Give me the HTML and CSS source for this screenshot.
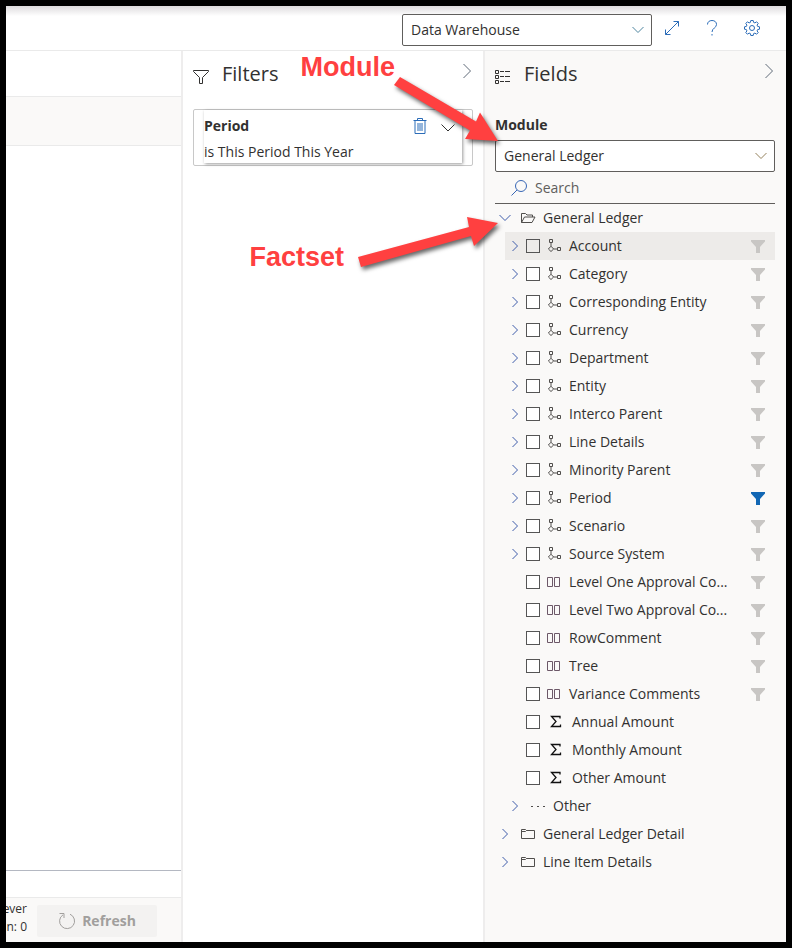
FILE: index.html
```html
<!DOCTYPE html>
<html lang="en">
<head>
<meta charset="utf-8">
<title>Data Warehouse</title>
<link rel="stylesheet" href="styles.css">
</head>
<body>
<svg class="sprite" aria-hidden="true">
  <symbol id="right" viewBox="0 0 16 16"><path d="M5.500 3 10.500 8 5.500 13"/></symbol>
  <symbol id="down" viewBox="0 0 16 16"><path d="M2.500 5 8 10.500 13.500 5"/></symbol>
  <symbol id="hier" viewBox="0 0 16 16"><path d="M3.500 1.500h3v3h-3zM11.500 9.500h3v3h-3zM5 4.500v3.500M7.500 11h4"/><path d="M5 8.200 7.600 11 5 13.500 2.400 11z"/></symbol>
  <symbol id="cols" viewBox="0 0 16 16"><path d="M1.500 3.500h5v9h-5zM8.500 3.500h5v9h-5z"/></symbol>
  <symbol id="sigma" viewBox="0 0 19 16"><path d="M14 4.500V2.500H5.500L10 7.500 5.500 12.500H14.500V10.500"/></symbol>
  <symbol id="dots" viewBox="0 0 16 16"><path d="M1 8.500h2M7 8.500h2M13 8.500h2"/></symbol>
  <symbol id="folder" viewBox="0 0 16 16"><path d="M1.500 12.500v-9h4l1 1h8v8zM1.500 5.500h4l1-1"/></symbol>
  <symbol id="open" viewBox="0 0 16 16"><path d="M1.500 12.500v-9h4l1.500 1.500h5.500v2M1.500 12.500 4.500 7h10.500l-3 5.500z"/></symbol>
  <symbol id="funnel" viewBox="0 0 16 16"><path d="M1 2h14v1.500L10 9v6H6V9L1 3.500z"/></symbol>
</svg>
<div class="app">
  <header class="topbar">
    <div class="select-box top-select">
      <select aria-label="Data source"><option>Data Warehouse</option></select>
      <svg class="down teal"><use href="#down"/></svg>
    </div>
    <button class="tool" aria-label="Expand"><svg viewBox="0 0 16 16"><path d="M1.500 14.500 14.500 1.500M9.500 1.500h5v5M1.500 9.500v5h5"/></svg></button>
    <button class="tool" aria-label="Help"><svg viewBox="0 0 16 16"><path d="M3.500 4.500C3.500 2 5.300.5 8 .5s4.500 1.500 4.500 4c0 3.500-4.500 3.500-4.500 7.500M8 14v1.500"/></svg></button>
    <button class="tool" aria-label="Settings"><svg viewBox="0 0 16 16"><circle cx="8" cy="8" r="2.500"/><path d="M6.800.5h2.400l.4 1.900 1.300.5 1.700-1.100 1.600 1.600-1.100 1.700.5 1.300 1.900.4v2.400l-1.900.4-.5 1.300 1.100 1.700-1.600 1.600-1.700-1.100-1.300.5-.4 1.900H6.800l-.4-1.900-1.300-.5-1.700 1.100-1.600-1.600 1.100-1.700-.5-1.300-1.900-.4V6.800l1.900-.4.5-1.300-1.100-1.700 1.600-1.600 1.700 1.100 1.300-.5z"/></svg></button>
  </header>
  <main class="panes">
    <section class="report">
      <div class="band"></div>
      <div class="canvas"></div>
      <footer class="status">
        <div class="status-text"><span>ever</span><span>n: 0</span></div>
        <button class="refresh" disabled><svg viewBox="0 0 18 18"><path d="M12 2.200a7.500 7.500 0 1 1-7 .6M1.500 1.500h4.500v4.500"/></svg>Refresh</button>
      </footer>
    </section>
    <section class="pane">
      <div class="title">
        <svg viewBox="0 0 16 16"><path d="M.5 1.500h15v1L9.500 8.500v6h-3v-6L.5 2.500z"/></svg>
        <h2>Filters</h2>
        <button class="collapse" aria-label="Collapse filters"><svg viewBox="0 0 16 16"><path d="M4.500 1 11.500 8 4.500 15"/></svg></button>
      </div>
      <div class="filter">
        <div class="filter-card">
          <div class="filter-head">
            <h3>Period</h3>
            <button aria-label="Delete filter"><svg class="trash" viewBox="0 0 16 16"><path d="M1.500 2.500h13M5.500 2.500v-2h5v2M3 2.500v13h10v-13M6 5v8M8 5v8M10 5v8"/></svg></button>
            <button aria-label="Expand filter"><svg viewBox="0 0 16 16"><path d="M1.500 6.500 8 13 14.500 6.500"/></svg></button>
          </div>
          <p>is This Period This Year</p>
        </div>
      </div>
    </section>
    <section class="pane fields">
      <div class="title">
        <svg viewBox="0 0 16 16"><path d="M.5 1.500h3v3h-3zM.5 6.500h3v3h-3zM.5 11.500h3v3h-3zM5 2.500h4M10 2.500h5M5 7.500h4M10 7.500h5M5 12.500h4M10 12.500h5"/></svg>
        <h2>Fields</h2>
        <button class="collapse" aria-label="Collapse fields"><svg viewBox="0 0 16 16"><path d="M4.500 1 11.500 8 4.500 15"/></svg></button>
      </div>
      <label class="module-label" for="module">Module</label>
      <div class="select-box">
        <select id="module"><option>General Ledger</option></select>
        <svg class="down amber"><use href="#down"/></svg>
      </div>
      <div class="search">
        <svg viewBox="0 0 16 16"><circle cx="10" cy="6" r="5.500"/><path d="M6 10 .5 15.500"/></svg>
        <input type="search" placeholder="Search" aria-label="Search">
      </div>
      <ul class="tree">
        <li><div class="row"><button class="twist" aria-label="Toggle"><svg><use href="#down"/></svg></button><svg class="icon lead"><use href="#open"/></svg><span>General Ledger</span></div>
          <ul>
            <li class="row active"><button class="twist" aria-label="Toggle"><svg><use href="#right"/></svg></button><input type="checkbox" id="f1"><svg class="icon"><use href="#hier"/></svg><label for="f1">Account</label><button class="funnel" aria-label="Filter"><svg><use href="#funnel"/></svg></button></li>
            <li class="row"><button class="twist" aria-label="Toggle"><svg><use href="#right"/></svg></button><input type="checkbox" id="f2"><svg class="icon"><use href="#hier"/></svg><label for="f2">Category</label><button class="funnel" aria-label="Filter"><svg><use href="#funnel"/></svg></button></li>
            <li class="row"><button class="twist" aria-label="Toggle"><svg><use href="#right"/></svg></button><input type="checkbox" id="f3"><svg class="icon"><use href="#hier"/></svg><label for="f3">Corresponding Entity</label><button class="funnel" aria-label="Filter"><svg><use href="#funnel"/></svg></button></li>
            <li class="row"><button class="twist" aria-label="Toggle"><svg><use href="#right"/></svg></button><input type="checkbox" id="f4"><svg class="icon"><use href="#hier"/></svg><label for="f4">Currency</label><button class="funnel" aria-label="Filter"><svg><use href="#funnel"/></svg></button></li>
            <li class="row"><button class="twist" aria-label="Toggle"><svg><use href="#right"/></svg></button><input type="checkbox" id="f5"><svg class="icon"><use href="#hier"/></svg><label for="f5">Department</label><button class="funnel" aria-label="Filter"><svg><use href="#funnel"/></svg></button></li>
            <li class="row"><button class="twist" aria-label="Toggle"><svg><use href="#right"/></svg></button><input type="checkbox" id="f6"><svg class="icon"><use href="#hier"/></svg><label for="f6">Entity</label><button class="funnel" aria-label="Filter"><svg><use href="#funnel"/></svg></button></li>
            <li class="row"><button class="twist" aria-label="Toggle"><svg><use href="#right"/></svg></button><input type="checkbox" id="f7"><svg class="icon"><use href="#hier"/></svg><label for="f7">Interco Parent</label><button class="funnel" aria-label="Filter"><svg><use href="#funnel"/></svg></button></li>
            <li class="row"><button class="twist" aria-label="Toggle"><svg><use href="#right"/></svg></button><input type="checkbox" id="f8"><svg class="icon"><use href="#hier"/></svg><label for="f8">Line Details</label><button class="funnel" aria-label="Filter"><svg><use href="#funnel"/></svg></button></li>
            <li class="row"><button class="twist" aria-label="Toggle"><svg><use href="#right"/></svg></button><input type="checkbox" id="f9"><svg class="icon"><use href="#hier"/></svg><label for="f9">Minority Parent</label><button class="funnel" aria-label="Filter"><svg><use href="#funnel"/></svg></button></li>
            <li class="row"><button class="twist" aria-label="Toggle"><svg><use href="#right"/></svg></button><input type="checkbox" id="f10"><svg class="icon"><use href="#hier"/></svg><label for="f10">Period</label><button class="funnel on" aria-label="Filter"><svg><use href="#funnel"/></svg></button></li>
            <li class="row"><button class="twist" aria-label="Toggle"><svg><use href="#right"/></svg></button><input type="checkbox" id="f11"><svg class="icon"><use href="#hier"/></svg><label for="f11">Scenario</label><button class="funnel" aria-label="Filter"><svg><use href="#funnel"/></svg></button></li>
            <li class="row"><button class="twist" aria-label="Toggle"><svg><use href="#right"/></svg></button><input type="checkbox" id="f12"><svg class="icon"><use href="#hier"/></svg><label for="f12">Source System</label><button class="funnel" aria-label="Filter"><svg><use href="#funnel"/></svg></button></li>
            <li class="row leaf"><input type="checkbox" id="f13"><svg class="icon plum"><use href="#cols"/></svg><label for="f13">Level One Approval Co...</label><button class="funnel" aria-label="Filter"><svg><use href="#funnel"/></svg></button></li>
            <li class="row leaf"><input type="checkbox" id="f14"><svg class="icon plum"><use href="#cols"/></svg><label for="f14">Level Two Approval Co...</label><button class="funnel" aria-label="Filter"><svg><use href="#funnel"/></svg></button></li>
            <li class="row leaf"><input type="checkbox" id="f15"><svg class="icon plum"><use href="#cols"/></svg><label for="f15">RowComment</label><button class="funnel" aria-label="Filter"><svg><use href="#funnel"/></svg></button></li>
            <li class="row leaf"><input type="checkbox" id="f16"><svg class="icon plum"><use href="#cols"/></svg><label for="f16">Tree</label><button class="funnel" aria-label="Filter"><svg><use href="#funnel"/></svg></button></li>
            <li class="row leaf"><input type="checkbox" id="f17"><svg class="icon plum"><use href="#cols"/></svg><label for="f17">Variance Comments</label><button class="funnel" aria-label="Filter"><svg><use href="#funnel"/></svg></button></li>
            <li class="row leaf"><input type="checkbox" id="f18"><svg class="icon sum"><use href="#sigma"/></svg><label for="f18">Annual Amount</label></li>
            <li class="row leaf"><input type="checkbox" id="f19"><svg class="icon sum"><use href="#sigma"/></svg><label for="f19">Monthly Amount</label></li>
            <li class="row leaf"><input type="checkbox" id="f20"><svg class="icon sum"><use href="#sigma"/></svg><label for="f20">Other Amount</label></li>
            <li class="row"><button class="twist" aria-label="Toggle"><svg><use href="#right"/></svg></button><svg class="icon lead"><use href="#dots"/></svg><span>Other</span></li>
          </ul>
        </li>
        <li class="row"><button class="twist" aria-label="Toggle"><svg><use href="#right"/></svg></button><svg class="icon lead"><use href="#folder"/></svg><span>General Ledger Detail</span></li>
        <li class="row"><button class="twist" aria-label="Toggle"><svg><use href="#right"/></svg></button><svg class="icon lead"><use href="#folder"/></svg><span>Line Item Details</span></li>
      </ul>
    </section>
  </main>
  <div class="note note-module">Module</div>
  <svg class="arrow arrow-module" viewBox="0 0 106 70"><path d="M7 3 83 47.500 87 38.500 105 67 72 65 77 56.500 1 11z"/></svg>
  <div class="note note-factset">Factset</div>
  <svg class="arrow arrow-factset" viewBox="0 0 142 52"><path d="M1 41 112 11 110 1 141 7 117 30 114 20 4 51z"/></svg>
</div>
</body>
</html>
```
FILE: styles.css
```css
* { box-sizing: border-box; margin: 0; padding: 0; }

body {
  font: 14px/20px "Open Sans", "Noto Sans", sans-serif;
  color: #323130;
  background: #000;
}

button { background: none; border: 0; font: inherit; color: inherit; }
svg { fill: none; stroke: currentColor; width: 16px; height: 16px; flex: none; display: block; }
ul { list-style: none; }

.sprite { position: absolute; width: 0; height: 0; }

.app {
  position: relative;
  display: flex;
  flex-direction: column;
  min-height: 100vh;
  border: 6px solid #000;
  background: #fff;
}

.topbar {
  display: flex;
  align-items: center;
  justify-content: flex-end;
  height: 45px;
  padding-right: 14px;
  border-bottom: 1px solid #eaeaea;
  background: linear-gradient(#dddbdd, #fff 10px);
}

.top-select { width: 250px; margin-top: 4px; }

.tool { display: flex; justify-content: center; width: 40px; color: #2b6cb8; }

.select-box { position: relative; height: 32px; }
.select-box select {
  width: 100%;
  height: 100%;
  padding: 0 32px 0 8px;
  border: 1px solid #605e5c;
  border-radius: 2px;
  appearance: none;
  background: #fff;
  font: inherit;
  color: inherit;
}
.down { position: absolute; right: 6px; top: 8px; pointer-events: none; }
.teal { color: #4f86a0; }
.amber { color: #94815c; }

.panes { flex: 1; display: grid; grid-template-columns: 1fr 302px 303px; }

.report { display: flex; flex-direction: column; min-width: 0; }
.band {
  height: 50px;
  margin-top: 45px;
  border-top: 1px solid #eaeaea;
  border-bottom: 1px solid #eaeaea;
  background: #faf9f8;
}
.canvas { flex: 1; border-bottom: 1px solid #b4b8c2; }
.status {
  display: flex;
  align-items: flex-start;
  gap: 10px;
  height: 45px;
  margin-top: 26px;
  padding-top: 7px;
  border-top: 1px solid #eaeaea;
  background: #faf9f8;
  overflow: hidden;
}
.status-text {
  display: flex;
  flex-direction: column;
  align-items: flex-end;
  width: 21px;
  margin-top: -5px;
  font-size: 12px;
  line-height: 18px;
  white-space: nowrap;
}
.refresh {
  display: flex;
  align-items: center;
  justify-content: center;
  gap: 6px;
  width: 120px;
  height: 32px;
  border-radius: 2px;
  background: #f3f2f1;
  color: #a19f9d;
  font-weight: 700;
}
.refresh svg { width: 18px; height: 18px; }

.pane { border-left: 2px solid #eeeded; padding: 0 10px; }
.fields { background: #faf9f8; padding-right: 11px; }

.title { display: flex; align-items: center; height: 46px; margin-bottom: 12px; }
.title > svg { margin-top: 5px; }
.title h2 { flex: 1; margin-left: 13px; font-size: 20px; line-height: 28px; font-weight: 400; }
.collapse { margin: 0 -2px 6px 0; color: #5f6a78; }

.filter { padding: 0 10px 2px 10px; border: 1px solid #c8c8c8; border-radius: 2px; }
.filter-card { padding: 6px 6px 0 0; height: 53px; box-shadow: 1px 1px 3px rgba(0, 0, 0, 0.4); }
.filter-head { display: flex; gap: 12px; margin-bottom: 6px; }
.filter-head h3 { flex: 1; font-size: 14px; font-weight: 700; }
.filter-head .trash { color: #2b6cb8; }

.module-label { display: block; margin-top: 18px; padding-bottom: 5px; font-weight: 700; }

.search {
  display: flex;
  align-items: center;
  gap: 8px;
  height: 32px;
  padding-left: 16px;
  border-bottom: 1px solid #605e5c;
  color: #3867b5;
}
.search input {
  flex: 1;
  min-width: 0;
  border: 0;
  outline: 0;
  background: none;
  font: inherit;
}
.search input::placeholder { color: #605e5c; }

.tree ul { padding-left: 10px; }
.row { display: flex; align-items: center; height: 28px; }
.active { background: #edebe9; }
.twist { width: 20px; display: flex; justify-content: center; color: #3e5cab; }
.row input {
  width: 14px;
  height: 14px;
  margin: 0 1px;
  border: 1px solid #555;
  appearance: none;
  background: #fff;
}
.active input { background: none; }
.leaf { padding-left: 20px; }
.icon { margin: 0 7px 0 5px; color: #504e4c; }
.plum { color: #6c5868; }
.sum { width: 19px; color: #111; stroke-width: 1.3; }
.row label { flex: 1; white-space: nowrap; }
.funnel { display: flex; justify-content: center; width: 34px; color: #c8c6c4; }
.funnel svg { fill: currentColor; stroke: none; }
.on { color: #1267b4; }

.note {
  position: absolute;
  font: 700 27px/32px "Liberation Sans", Arial, sans-serif;
  color: #ff4040;
}
.note-module { right: 391px; top: 45px; }
.note-factset { right: 442px; top: 235px; }
.arrow {
  position: absolute;
  fill: #ff4040;
  stroke: none;
  overflow: visible;
  pointer-events: none;
  filter: drop-shadow(2px 3px 2px rgba(0, 0, 0, 0.6));
}
.arrow-module { width: 106px; height: 70px; right: 287px; top: 68px; }
.arrow-factset { width: 142px; height: 52px; right: 287px; top: 210px; }
```
